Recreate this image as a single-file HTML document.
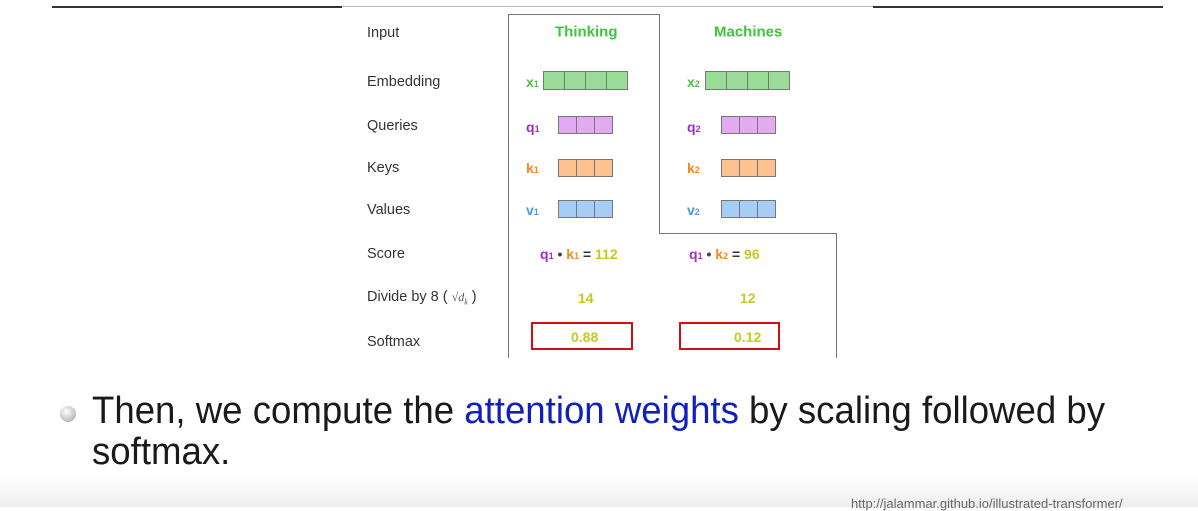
<!DOCTYPE html><html><head><style>
body{margin:0;width:1198px;height:507px;background:#fff;position:relative;overflow:hidden;font-family:"Liberation Sans",sans-serif}
.a{position:absolute}
.l{position:absolute;left:367px;font-size:14.5px;color:#333;transform:translateY(-45%)}
.g{position:absolute;font-weight:bold;font-size:14px;transform:translateY(-50%)}
.cells{position:absolute;display:flex}
.cells div{border:1px solid #777;margin-left:-1px}
</style></head><body>
<div class="a" style="left:52px;top:6px;width:290px;height:2px;background:#333"></div>
<div class="a" style="left:342px;top:6px;width:531px;height:1px;background:#bbb"></div>
<div class="a" style="left:873px;top:6px;width:290px;height:2px;background:#333"></div>
<div class="a" style="left:508px;top:14px;width:1px;height:344px;background:#777"></div>
<div class="a" style="left:508px;top:14px;width:152px;height:1px;background:#777"></div>
<div class="a" style="left:659px;top:14px;width:1px;height:220px;background:#777"></div>
<div class="a" style="left:659px;top:233px;width:178px;height:1px;background:#777"></div>
<div class="a" style="left:836px;top:233px;width:1px;height:125px;background:#777"></div>

<div class="l" style="top:32px">Input</div>
<div class="l" style="top:81px">Embedding</div>
<div class="l" style="top:125px">Queries</div>
<div class="l" style="top:167px">Keys</div>
<div class="l" style="top:209px">Values</div>
<div class="l" style="top:253px">Score</div>
<div class="l" style="top:297px">Divide by 8 ( <span style="font-family:'Liberation Serif',serif;font-style:italic;font-size:12px;color:#555">√d<sub style="font-size:8px">k</sub></span> )</div>
<div class="l" style="top:341px">Softmax</div>

<div class="g" style="left:555px;top:32px;color:#3ec43e;font-size:15px">Thinking</div>
<div class="g" style="left:714px;top:32px;color:#3ec43e;font-size:15px">Machines</div>

<div class="g" style="left:526px;top:82px;color:#4cbf4c">x<small style="font-size:9px">1</small></div>
<div class="g" style="left:687px;top:82px;color:#4cbf4c">x<small style="font-size:9px">2</small></div>
<div class="cells" style="left:544px;top:71px"><div style="width:20px;height:17px;background:#99dd99"></div><div style="width:20px;height:17px;background:#99dd99"></div><div style="width:20px;height:17px;background:#99dd99"></div><div style="width:20px;height:17px;background:#99dd99"></div></div>
<div class="cells" style="left:706px;top:71px"><div style="width:20px;height:17px;background:#99dd99"></div><div style="width:20px;height:17px;background:#99dd99"></div><div style="width:20px;height:17px;background:#99dd99"></div><div style="width:20px;height:17px;background:#99dd99"></div></div>

<div class="g" style="left:526px;top:127px;color:#a030c0">q<small style="font-size:9px">1</small></div>
<div class="g" style="left:687px;top:127px;color:#a030c0">q<small style="font-size:9px">2</small></div>
<div class="cells" style="left:559px;top:116px"><div style="width:17px;height:16px;background:#e2aaf0"></div><div style="width:17px;height:16px;background:#e2aaf0"></div><div style="width:17px;height:16px;background:#e2aaf0"></div></div>
<div class="cells" style="left:722px;top:116px"><div style="width:17px;height:16px;background:#e2aaf0"></div><div style="width:17px;height:16px;background:#e2aaf0"></div><div style="width:17px;height:16px;background:#e2aaf0"></div></div>

<div class="g" style="left:526px;top:168px;color:#f08a20">k<small style="font-size:9px">1</small></div>
<div class="g" style="left:687px;top:168px;color:#f08a20">k<small style="font-size:9px">2</small></div>
<div class="cells" style="left:559px;top:159px"><div style="width:17px;height:16px;background:#fcc391"></div><div style="width:17px;height:16px;background:#fcc391"></div><div style="width:17px;height:16px;background:#fcc391"></div></div>
<div class="cells" style="left:722px;top:159px"><div style="width:17px;height:16px;background:#fcc391"></div><div style="width:17px;height:16px;background:#fcc391"></div><div style="width:17px;height:16px;background:#fcc391"></div></div>

<div class="g" style="left:526px;top:210px;color:#4a9ae0">v<small style="font-size:9px">1</small></div>
<div class="g" style="left:687px;top:210px;color:#4a9ae0">v<small style="font-size:9px">2</small></div>
<div class="cells" style="left:559px;top:200px"><div style="width:17px;height:16px;background:#a6cdf5"></div><div style="width:17px;height:16px;background:#a6cdf5"></div><div style="width:17px;height:16px;background:#a6cdf5"></div></div>
<div class="cells" style="left:722px;top:200px"><div style="width:17px;height:16px;background:#a6cdf5"></div><div style="width:17px;height:16px;background:#a6cdf5"></div><div style="width:17px;height:16px;background:#a6cdf5"></div></div>

<div class="g" style="left:540px;top:254px"><span style="color:#a030c0">q<small style="font-size:9px">1</small></span> <span style="color:#444">•</span> <span style="color:#f08a20">k<small style="font-size:9px">1</small></span> <span style="color:#333">=</span> <span style="color:#c8c820">112</span></div>
<div class="g" style="left:689px;top:254px"><span style="color:#a030c0">q<small style="font-size:9px">1</small></span> <span style="color:#444">•</span> <span style="color:#f08a20">k<small style="font-size:9px">2</small></span> <span style="color:#333">=</span> <span style="color:#c8c820">96</span></div>
<div class="g" style="left:578px;top:298px;color:#c8c820">14</div>
<div class="g" style="left:740px;top:298px;color:#c8c820">12</div>
<div class="a" style="left:531px;top:322px;width:98px;height:24px;border:2px solid #d01010"></div>
<div class="a" style="left:679px;top:322px;width:97px;height:24px;border:2px solid #d01010"></div>
<div class="g" style="left:571px;top:337px;color:#c8c820">0.88</div>
<div class="g" style="left:734px;top:337px;color:#c8c820">0.12</div>

<div class="a" style="left:60px;top:406px;width:16px;height:16px;border-radius:50%;background:radial-gradient(circle at 40% 35%,#fff,#bbb 70%,#999)"></div>
<div class="a" style="left:92px;top:391px;font-family:'Liberation Sans',sans-serif;font-size:38px;line-height:41px;color:#1a1a1a;white-space:nowrap;transform:scaleX(0.963);transform-origin:left">Then, we compute the <span style="color:#1020c0">attention weights</span> by scaling followed by<br>softmax.</div>
<div class="a" style="left:0;top:475px;width:1198px;height:32px;background:linear-gradient(#fff,#eee)"></div>
<div class="a" style="left:851px;top:496px;font-size:13px;color:#666">http://jalammar.github.io/illustrated-transformer/</div>
</body></html>
